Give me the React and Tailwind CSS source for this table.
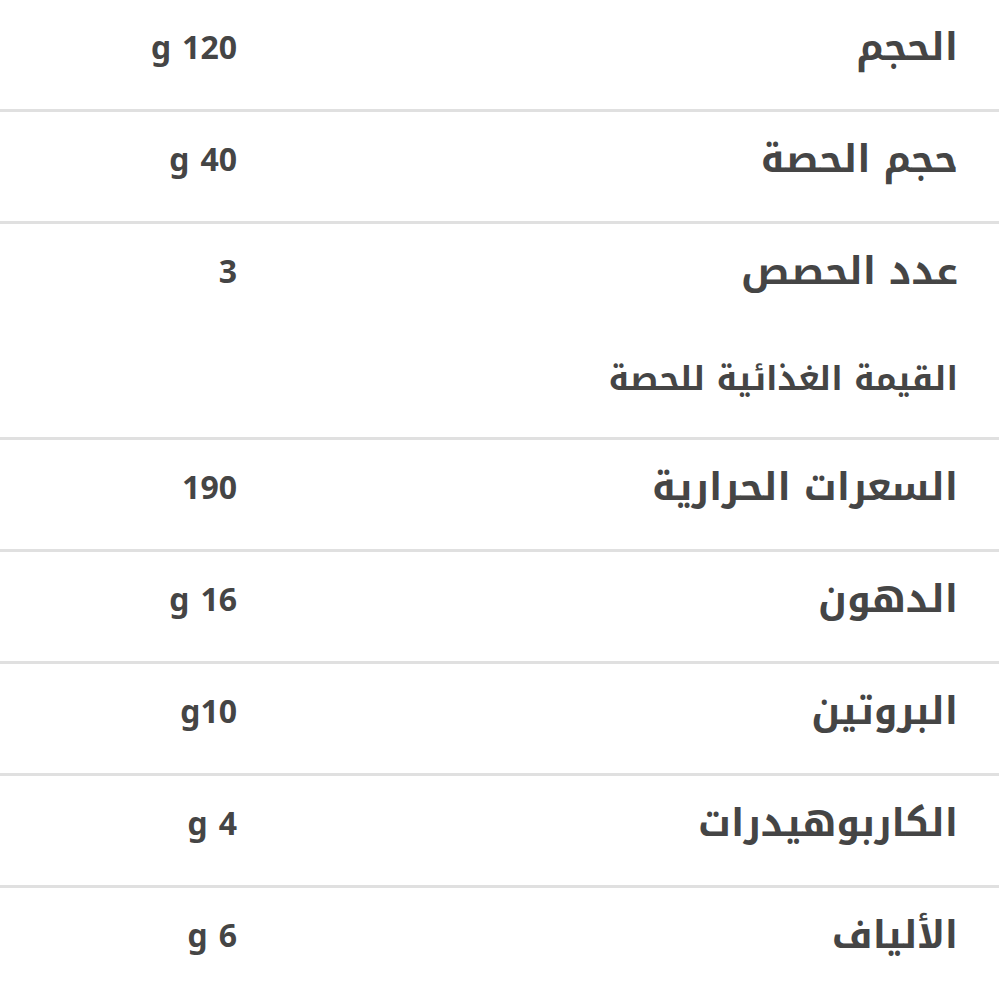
import React from 'react';

const rows = [
  { label: 'الحجم', value: '120 g' },
  { label: 'حجم الحصة', value: '40 g' },
  { label: 'عدد الحصص', value: '3', subtitle: 'القيمة الغذائية للحصة' },
  { label: 'السعرات الحرارية', value: '190' },
  { label: 'الدهون', value: '16 g' },
  { label: 'البروتين', value: 'g10' },
  { label: 'الكاربوهيدرات', value: '4 g' },
  { label: 'الألياف', value: '6 g' },
];

const font = { fontFamily: '"Noto Kufi Arabic", "Noto Sans Arabic", "Open Sans", "DejaVu Sans", sans-serif' };

const App = () => {
  return (
    <div dir="rtl" className="min-h-screen bg-white text-[#454545] overflow-hidden" style={font}>
      <div className="-mt-[3px]">
        {rows.map((row, i) => (
          <div key={i} className="border-t-[3px] border-[#e0e0e0]">
            <div className="flex h-[109px] pt-[23px]">
              <div className="flex-1 pr-[41px] text-[38px] font-bold leading-[48px]">{row.label}</div>
              <div className="w-[262px] pr-[25px] pt-[2px] text-[32px] font-bold leading-[48px]">{row.value}</div>
            </div>
            {row.subtitle && (
              <div className="h-[104px] pr-[41px] pt-[22px] text-[33px] font-bold leading-[48px]">{row.subtitle}</div>
            )}
          </div>
        ))}
      </div>
    </div>
  );
};

export default App;
